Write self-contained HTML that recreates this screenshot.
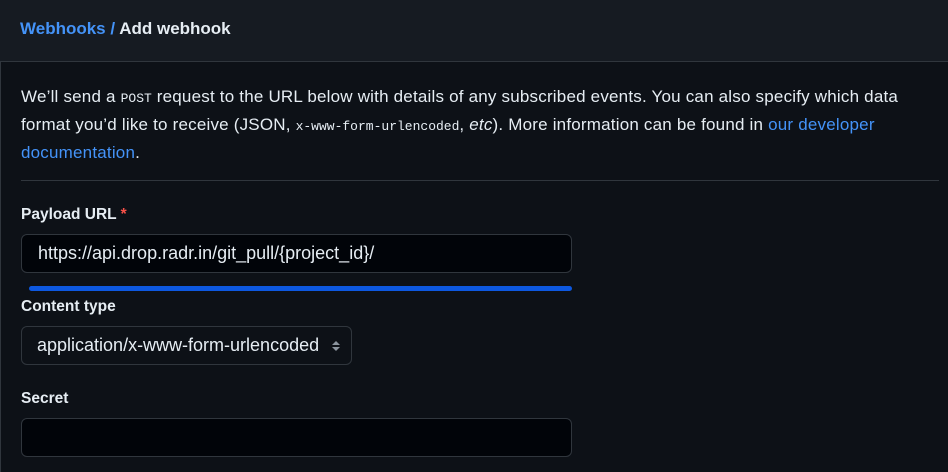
<!DOCTYPE html>
<html><head><style>
*{box-sizing:border-box;margin:0;padding:0}
body{width:948px;height:472px;background:#0d1117;font-family:"Liberation Sans",sans-serif;color:#e6edf3;overflow:hidden;position:relative}
.hdr{position:absolute;left:0;top:0;width:948px;height:62px;background:#161b22;border-bottom:1px solid #30363d}
.hdr span{position:absolute;left:20px;top:19px;font-size:17px;font-weight:bold}
.main{position:absolute;left:0;top:62px;width:948px;height:410px;border-left:1px solid #30363d}
p.d{position:absolute;left:20px;top:22px;width:910px;font-size:17px;line-height:26px;color:#e6edf3;letter-spacing:0.2px}
code{font-family:"Liberation Mono",monospace;font-size:13px;letter-spacing:0}
a{color:#4493f8;text-decoration:none}
.hr{position:absolute;left:20px;top:118px;width:918px;height:1px;background:#30363d}
.lbl{position:absolute;left:20px;font-size:15.5px;font-weight:bold}
.inp{position:absolute;left:20px;width:551px;height:39px;background:#010409;border:1px solid #30363d;border-radius:6px;font-size:18px;padding:8px 0 0 16px}
</style></head><body>
<div class="hdr"><span><a>Webhooks</a> <span style="position:static;color:#4493f8;font-weight:bold">/</span> Add webhook</span></div>
<div class="main">
<p class="d">We’ll send a <code>POST</code> request to the URL below with details of any subscribed events. You can also specify which data format you’d like to receive (JSON, <code>x-www-form-urlencoded</code>, <i>etc</i>). More information can be found in <a>our developer documentation</a>.</p>
<div class="hr"></div>
<div class="lbl" style="top:144px">Payload URL <span style="color:#f85149">*</span></div>
<div class="inp" style="top:172px">https://api.drop.radr.in/git_pull/{project_id}/</div>
<div style="position:absolute;left:28px;top:224px;width:543px;height:5px;border-radius:3px;background:#0d58e0"></div>
<div class="lbl" style="top:236px">Content type</div>
<div class="inp" style="top:264px;width:331px;background:#0d1117;padding-left:15px">application/x-www-form-urlencoded
<svg style="position:absolute;right:10px;top:12px" width="10" height="14"><path d="M1 6L5 2L9 6Z M1 8L5 12L9 8Z" fill="#8b949e"/></svg></div>
<div class="lbl" style="top:328px">Secret</div>
<div class="inp" style="top:356px"></div>
</div>
</body></html>
